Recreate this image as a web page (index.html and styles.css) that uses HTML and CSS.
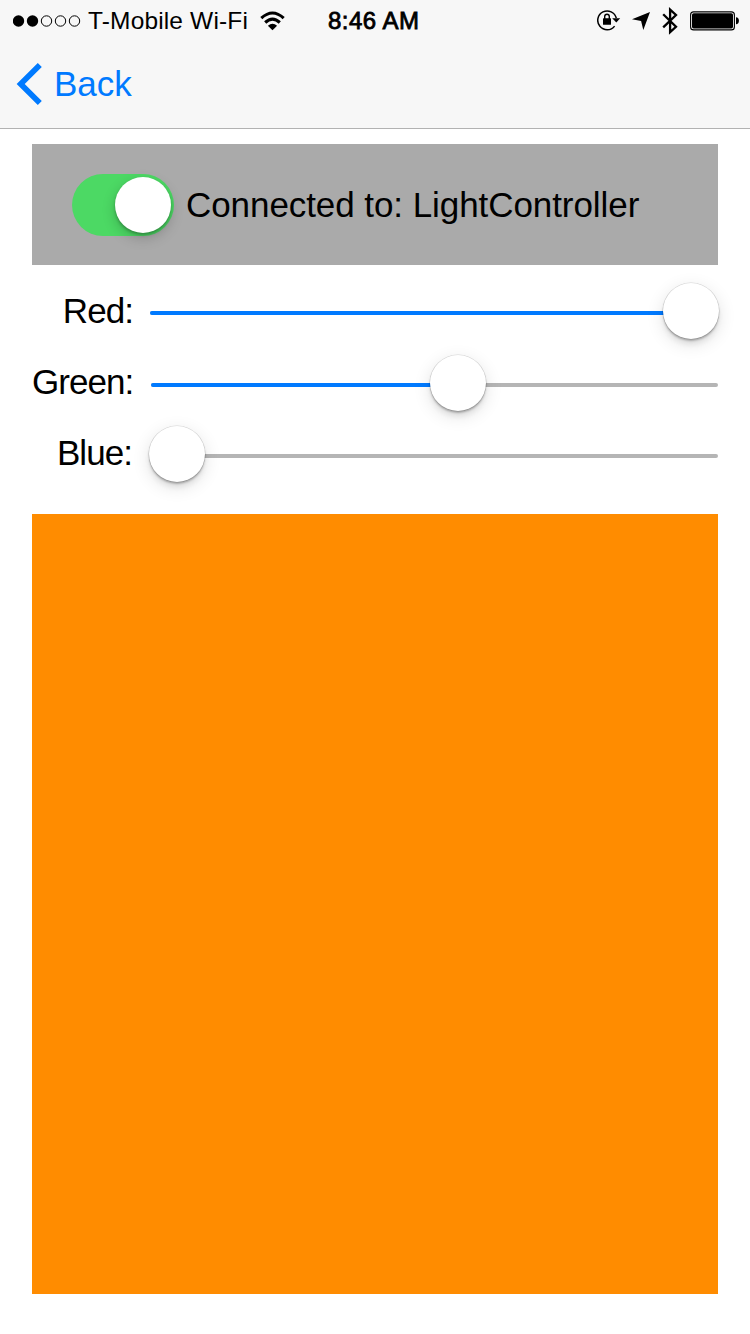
FILE: index.html
```html
<!DOCTYPE html>
<html lang="en">
<head>
<meta charset="utf-8">
<title>LightController</title>
<link rel="stylesheet" href="styles.css">
</head>
<body>
<header class="header">
  <div class="status">
    <div class="status-left">
      <svg class="signal" width="68" height="12" viewBox="0 0 68 12">
        <circle cx="5.5" cy="6" r="5.7"/><circle cx="19.5" cy="6" r="5.7"/>
        <g fill="none" stroke="#000" stroke-width="1"><circle cx="33.5" cy="6" r="5.2"/><circle cx="47.5" cy="6" r="5.2"/><circle cx="61.5" cy="6" r="5.2"/></g>
      </svg>
      <span class="carrier">T-Mobile Wi-Fi</span>
      <svg class="wifi" width="26" height="20" viewBox="0 0 26 20">
        <g fill="none" stroke="#000" stroke-width="3.1"><path d="M1.3 7.1Q12.5-3.1 23.7 7.1"/><path d="M5.2 11.5Q12.5 4.7 19.8 11.5"/></g>
        <path d="M7.9 14.7Q12.5 10.7 17.1 14.7L12.5 19.3z"/>
      </svg>
    </div>
    <span class="time">8:46 AM</span>
    <div class="status-right">
      <svg class="lock" width="24" height="22" viewBox="0 0 24 22">
        <path d="M17.6 17.1A9.4 9.4 0 1 1 19.3 9.2" fill="none" stroke="#000" stroke-width="1.5"/>
        <path d="M15.2 9.3H23.2L19.3 13.4z"/>
        <rect x="6" y="9.2" width="8" height="6.5" rx=".5"/>
        <path d="M7.7 10V7.5a2.3 2.3 0 0 1 4.6 0V10" fill="none" stroke="#000" stroke-width="1.4"/>
      </svg>
      <svg class="location" width="18" height="18" viewBox="0 0 18 18"><path d="M0 7.3L18 0L11.3 18L9.1 8.9z"/></svg>
      <svg class="bluetooth" width="16" height="28" viewBox="0 0 16 28"><path d="M1.2 7.2L14 19.8L8.1 25.2V2.6L14 8L1.2 20.4" fill="none" stroke="#000" stroke-width="2.3"/></svg>
      <svg class="battery" width="50" height="20" viewBox="0 0 50 20">
        <rect x=".6" y=".9" width="43.8" height="18" rx="3" fill="none" stroke="#000" stroke-width="1.1"/>
        <rect x="2" y="2.3" width="41" height="15.2" rx="1.7"/>
        <path d="M46 6.3q2.9.4 2.9 3.5t-2.9 3.5z"/>
      </svg>
    </div>
  </div>
  <nav class="nav">
    <svg class="chevron" width="27" height="44" viewBox="0 0 27 44"><path d="M23.8 3L4.7 22L23.8 41" fill="none" stroke="#007aff" stroke-width="5.7"/></svg>
    <span class="back">Back</span>
  </nav>
</header>
<main class="content">
  <section class="connection">
    <div class="switch"><div class="knob switch-knob"></div></div>
    <span class="connection-label">Connected to: LightController</span>
  </section>
  <section class="sliders">
    <label class="label">Red:</label>
    <div class="slider red"><div class="track"><div class="fill"></div></div><div class="knob thumb"></div></div>
    <label class="label raised">Green:</label>
    <div class="slider green"><div class="track"><div class="fill"></div></div><div class="knob thumb"></div></div>
    <label class="label raised blue-label">Blue:</label>
    <div class="slider blue"><div class="track"><div class="fill"></div></div><div class="knob thumb"></div></div>
  </section>
  <section class="preview"></section>
</main>
</body>
</html>
```
FILE: styles.css
```css
* { box-sizing: border-box; }
body {
  margin: 0;
  width: 750px;
  height: 1334px;
  overflow: hidden;
  background: #fff;
  color: #000;
  font-family: "Liberation Sans", Arial, sans-serif;
  font-size: 34px;
}
svg { display: block; flex: none; }
span, label { white-space: nowrap; }
.header {
  height: 129px;
  background: #f7f7f7;
  border-bottom: 1px solid #b2b2b2;
}
.status {
  display: grid;
  grid-template-columns: 328px 1fr 153px;
  height: 40px;
  line-height: 40px;
}
.status-left, .status-right { display: flex; align-items: center; }
.status-left { padding-left: 13px; }
.carrier {
  width: 160px;
  margin: 0 0 0 7px;
  font-size: 24.5px;
  letter-spacing: 0.15px;
}
.wifi { margin-left: 12px; }
.time {
  padding-top: 1px;
  font-size: 24px;
  letter-spacing: 0.5px;
  -webkit-text-stroke: 0.8px #000;
}
.lock { margin-top: -2px; }
.location { margin: 1px 0 0 11px; }
.bluetooth { margin-left: 12px; }
.battery { margin: 0 0 0 12px; }
.nav {
  display: flex;
  align-items: center;
  height: 88px;
  padding-left: 16px;
  color: #007aff;
}
.back { margin: 0 0 0 11px; font-size: 35px; }
.content { padding: 15px 32px 0; }
.connection {
  display: flex;
  align-items: center;
  height: 121px;
  padding-left: 40px;
  background: #aaa;
}
.switch {
  display: flex;
  justify-content: flex-end;
  width: 102px;
  height: 62px;
  padding: 3px;
  border-radius: 31px;
  background: #4cd964;
}
.knob {
  width: 56px;
  height: 56px;
  border-radius: 50%;
  background: #fff;
}
.switch-knob { box-shadow: 0 5px 14px rgba(0,0,0,.2), 0 2px 3px rgba(0,0,0,.25); }
.connection-label { margin-left: 12px; font-size: 35px; letter-spacing: -0.07px; }
.sliders {
  display: grid;
  grid-template-columns: 101px 568px;
  grid-template-rows: 72px 72px 70px;
  column-gap: 17px;
  height: 214px;
  margin: 10px 0 25px;
}
.label {
  align-self: center;
  text-align: right;
  font-size: 35px;
  letter-spacing: -0.95px;
}
.raised { padding-bottom: 3px; }
.blue-label { padding-right: 1px; }
.slider { position: relative; display: flex; align-items: center; }
.track {
  width: 100%;
  height: 4px;
  margin-top: 4px;
  border-radius: 2px;
  background: #b5b5b5;
}
.green .track { margin-left: 1px; }
.fill { height: 4px; border-radius: 2px; background: #007aff; }
.red .fill { width: 540px; }
.green .fill { width: 306px; }
.blue .fill { width: 0; }
.thumb {
  position: absolute;
  top: calc(50% - 28px);
  box-shadow: 0 0 0 .5px rgba(0,0,0,.15), 0 2px 2px rgba(0,0,0,.25), 0 6px 5px rgba(0,0,0,.06), 0 5px 18px rgba(0,0,0,.12);
}
.red .thumb { left: 513px; }
.green .thumb { left: 280px; }
.blue .thumb { left: -1px; }
.preview { height: 780px; background: #ff8c00; }
```
